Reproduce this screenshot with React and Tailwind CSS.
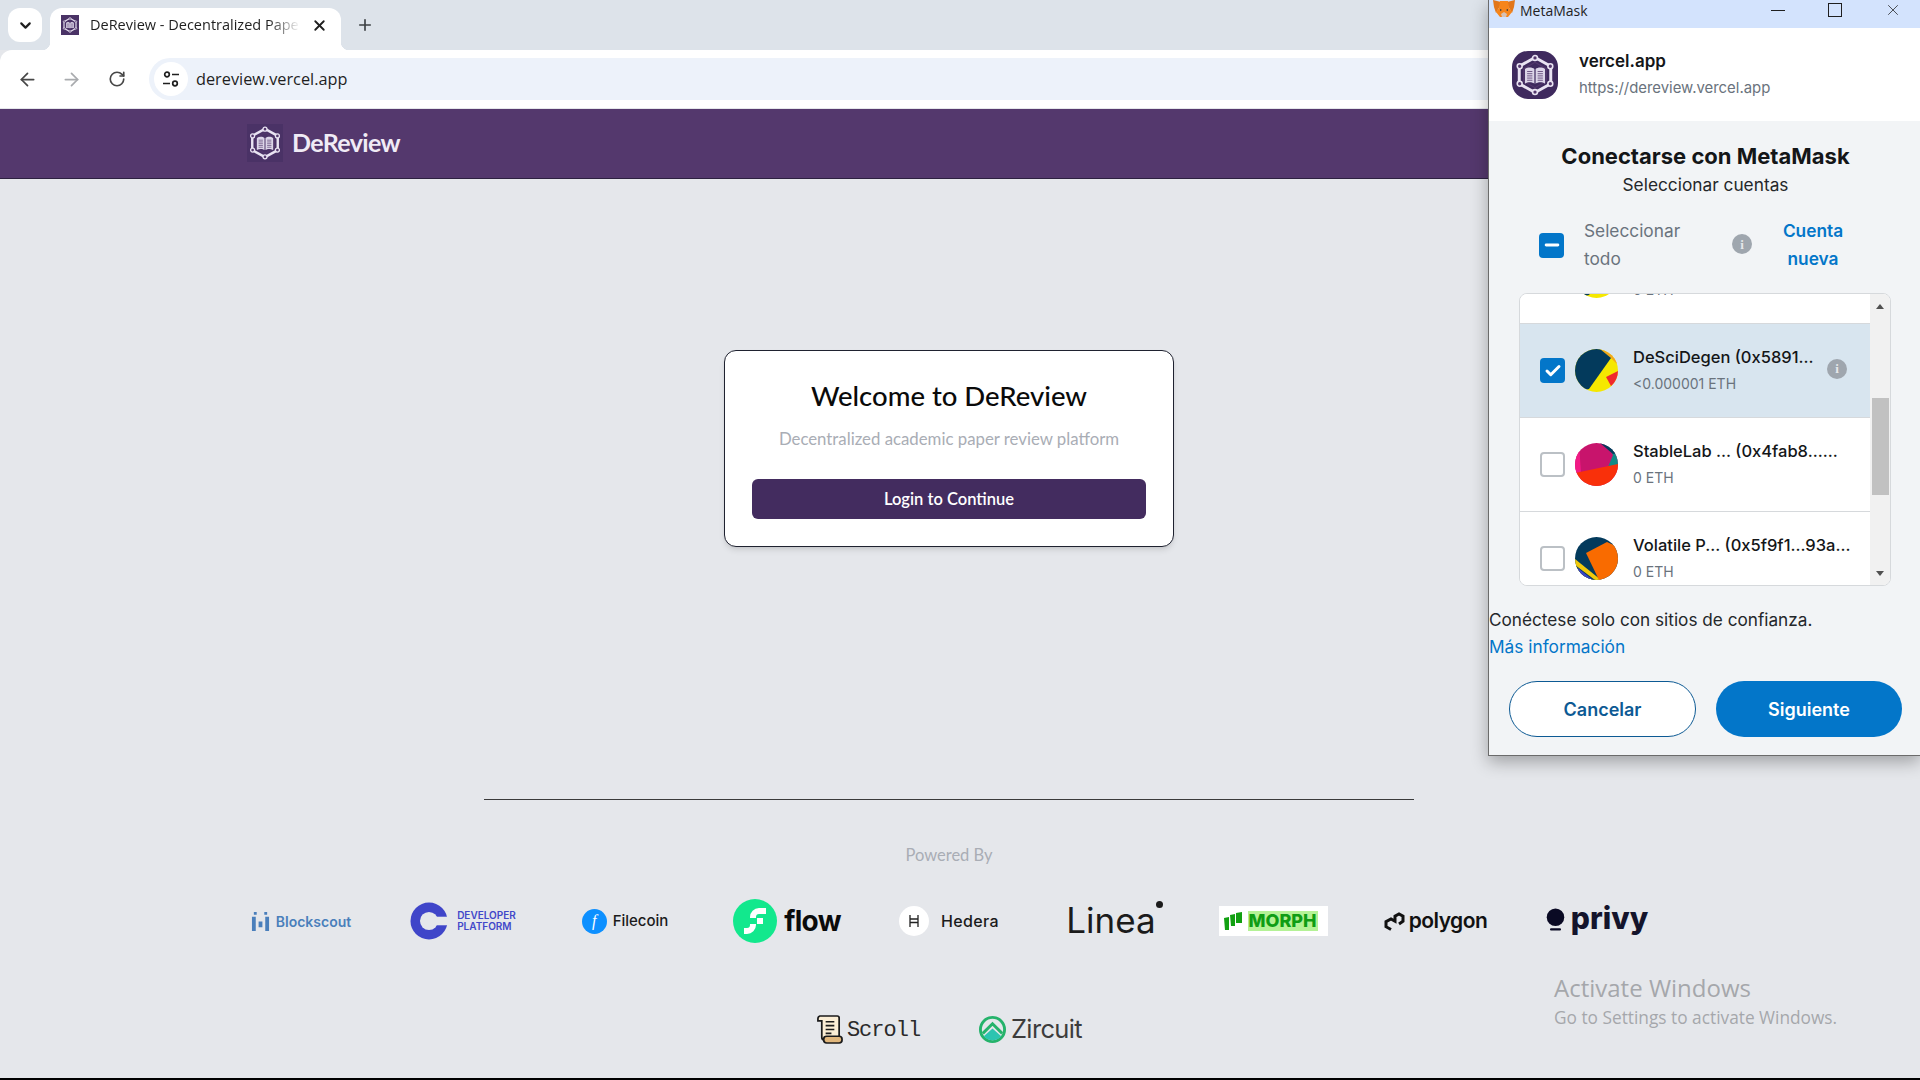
import React from 'react';
import { ArrowLeft, ArrowRight, ChevronDown, Minus, Check, Plus, RotateCw, X } from 'lucide-react';

function HexLogo({ className }) {
  return (
    <svg viewBox="0 0 48 48" className={className}>
      <path d="M24 4 L42 14 V34 L24 44 L6 34 V14 Z" fill="none" stroke="#e9e3f2" strokeWidth="3.4" strokeLinejoin="round" />
      <path d="M24 9.5 L37 17 V31 L24 38.5 L11 31 V17 Z" fill="none" stroke="#54386d" strokeWidth="1.2" />
      <g fill="#54386d" stroke="#e9e3f2" strokeWidth="1.8">
        <circle cx="24" cy="4.5" r="2.8" />
        <circle cx="41.5" cy="14" r="2.8" />
        <circle cx="41.5" cy="34" r="2.8" />
        <circle cx="24" cy="43.5" r="2.8" />
        <circle cx="6.5" cy="34" r="2.8" />
        <circle cx="6.5" cy="14" r="2.8" />
      </g>
      <path d="M12.5 17 C16 14.5 21 15 23.3 17 V34 C21 32 16 31.5 12.5 34 Z M24.7 17 C27 15 32 14.5 35.5 17 V34 C32 31.5 27 32 24.7 34 Z" fill="#dcd5e8" />
      <g stroke="#54386d" strokeWidth="0.9">
        <path d="M15 20H21M15 22.5H21M15 25H21M15 27.5H21M15 30H21M27 20H33M27 22.5H33M27 25H33M27 27.5H33M27 30H33" />
      </g>
    </svg>
  );
}

function Fox() {
  return (
    <svg viewBox="0 0 22 18" className="w-[22px] h-[18px]">
      <path d="M0 0 L8 2 L7 6 L3 13 L1 7 Z" fill="#e2761b" />
      <path d="M22 0 L14 2 L15 6 L19 13 L21 7 Z" fill="#e2761b" />
      <path d="M7 1 H15 L16 8 L19 12 L15 17 H7 L3 12 L6 8 Z" fill="#f6851b" />
      <path d="M8 14 L11 12 L14 14 L13 17 H9 Z" fill="#d7c1b3" />
      <path d="M7 9 L9 10 L7 11 Z M15 9 L13 10 L15 11 Z" fill="#233447" />
    </svg>
  );
}

function InfoDot({ className }) {
  return (
    <div className={`flex items-center justify-center w-5 h-5 rounded-full bg-[#9fa6ae] text-[#e6e8ea] ${className}`}>
      <span className="text-[13px] leading-none font-bold font-['Liberation_Serif',serif]">i</span>
    </div>
  );
}

function AvatarOne() {
  return (
    <svg viewBox="0 0 43 43" className="w-[43px] h-[43px] shrink-0 rounded-full">
      <rect width="43" height="43" fill="#f5e800" />
      <path d="M25 0 H43 V16 L36 9 Z" fill="#f2a61d" />
      <path d="M0 0 H25 L36 9 L14 40 L0 43 Z" fill="#033a5c" />
      <path d="M31 28 L43 22 L43 32 L36 37 Z" fill="#f0282d" />
    </svg>
  );
}

function AvatarTwo() {
  return (
    <svg viewBox="0 0 43 43" className="w-[43px] h-[43px] shrink-0 rounded-full">
      <rect width="43" height="43" fill="#c8146c" />
      <path d="M0 0 H4 L6 30 H0 Z" fill="#f11a85" />
      <path d="M30 0 H43 V23 L33 24 L38 12 Z" fill="#0f8a86" />
      <path d="M25 0 H43 V10 L38 11 Z" fill="#033a5c" />
      <path d="M0 30 L43 21 V43 H0 Z" fill="#f9300a" />
    </svg>
  );
}

function AvatarThree() {
  return (
    <svg viewBox="0 0 43 43" className="w-[43px] h-[43px] shrink-0 rounded-full">
      <rect width="43" height="43" fill="#033a5c" />
      <path d="M0 22 L26 43 H0 Z" fill="#f0c90a" />
      <path d="M0 28 L20 43 H0 Z" fill="#033a5c" />
      <path d="M3 31 L18 43 H3 Z" fill="#3a44c8" />
      <path d="M11 16 L32 5 L43 10 V43 H24 Z" fill="#f96b00" />
    </svg>
  );
}

function AccountRow({ name, balance, checked, avatar, info }) {
  return (
    <div className={`flex items-center h-[94px] shrink-0 pl-5 border-b border-[#d6d9dc] ${checked ? 'bg-[#d8e5ef]' : 'bg-white'}`}>
      {checked ? (
        <div className="flex items-center justify-center w-[25px] h-[25px] rounded bg-[#0376c9] shrink-0">
          <Check className="w-[18px] h-[18px] text-white" strokeWidth={4} />
        </div>
      ) : (
        <div className="w-[25px] h-[25px] rounded border-2 border-[#bbc0c5] bg-white shrink-0" />
      )}
      <div className="ml-[10px]">{avatar}</div>
      <div className="ml-[15px] min-w-0">
        <div className="text-[16.5px] leading-6 font-medium text-[#141618] whitespace-nowrap">{name}</div>
        <div className="mt-[3px] text-[14px] leading-6 text-[#6a737d]">{balance}</div>
      </div>
      {info && <InfoDot className="ml-auto mr-[23px] -mt-[4px]" />}
    </div>
  );
}

function Popup() {
  return (
    <div className="absolute top-0 right-0 w-[432px] h-[756px] flex flex-col bg-[#f2f4f6] border-l border-b border-[#6b6b6b] shadow-[0_6px_16px_rgba(0,0,0,0.3)] font-['Inter',sans-serif]">
      <div className="flex items-center h-[28px] shrink-0 bg-[#d3e3fd] overflow-hidden font-['Open_Sans',sans-serif]">
        <div className="ml-[4px] self-start"><Fox /></div>
        <span className="ml-[5px] text-[14px] text-[#1f1f1f] -mt-[8px]">MetaMask</span>
        <div className="ml-auto flex items-center -mt-[8px]">
          <div className="w-[14px] h-px bg-[#1f1f1f]" />
          <div className="ml-[43px] w-[14px] h-[14px] border border-[#1f1f1f]" />
          <X className="ml-[42px] mr-[18px] w-[18px] h-[18px] text-[#1f1f1f]" strokeWidth={1} />
        </div>
      </div>

      <div className="flex items-center h-[93px] shrink-0 bg-white pl-[23px]">
        <div className="w-[46px] h-[48px] flex items-center justify-center rounded-[16px] bg-[#3f2a5e]">
          <HexLogo className="w-[42px] h-[42px]" />
        </div>
        <div className="ml-[21px] -mt-[1px]">
          <div className="text-[17px] leading-6 font-semibold text-[#141618]">vercel.app</div>
          <div className="mt-[3px] text-[14.9px] leading-6 text-[#6a737d]">https://dereview.vercel.app</div>
        </div>
      </div>

      <div className="text-center mt-[21px] text-[22px] leading-7 font-bold text-[#141618] pl-[2px]">Conectarse con MetaMask</div>
      <div className="text-center mt-[3px] text-[17.3px] leading-6 text-[#24272a] pl-[2px]">Seleccionar cuentas</div>

      <div className="flex items-center mt-[18px] h-[60px] pl-[50px]">
        <div className="flex items-center justify-center w-[25px] h-[25px] rounded bg-[#0376c9] shrink-0">
          <Minus className="w-[20px] h-[20px] text-white" strokeWidth={3.5} />
        </div>
        <div className="ml-[20px] text-[17.3px] leading-7 text-[#6a737d] w-[130px]">Seleccionar todo</div>
        <InfoDot className="ml-[18px] -mt-[2px]" />
        <div className="ml-[10px] w-[102px] text-center text-[17.3px] leading-7 font-semibold text-[#0376c9]">Cuenta nueva</div>
      </div>

      <div className="mt-[18px] ml-[30px] w-[372px] h-[293px] shrink-0 flex rounded-lg border border-[#d6d9dc] bg-white overflow-hidden">
        <div className="flex-1 overflow-hidden">
          <div className="flex flex-col -mt-[64px]">
            <AccountRow name={'\u00a0'} balance="0 ETH" avatar={<AvatarOne />} />
            <AccountRow name="DeSciDegen (0x5891..." balance="<0.000001 ETH" avatar={<AvatarOne />} checked info />
            <AccountRow name="StableLab ... (0x4fab8......" balance="0 ETH" avatar={<AvatarTwo />} />
            <AccountRow name="Volatile P... (0x5f9f1...93a..." balance="0 ETH" avatar={<AvatarThree />} />
          </div>
        </div>
        <div className="w-[20px] shrink-0 bg-[#f1f1f1] flex flex-col items-center">
          <div className="mt-[10px] w-0 h-0 border-x-[4px] border-x-transparent border-b-[5px] border-b-[#505050]" />
          <div className="mt-[89px] w-[17px] h-[97px] bg-[#c1c1c1]" />
          <div className="mt-auto mb-[9px] w-0 h-0 border-x-[4px] border-x-transparent border-t-[5px] border-t-[#505050]" />
        </div>
      </div>

      <div className="mt-[22px] text-[17.2px] leading-6 text-[#24272a] whitespace-nowrap">Conéctese solo con sitios de confianza.</div>
      <div className="mt-[3px] text-[17.3px] leading-6 text-[#0376c9]">Más información</div>

      <div className="flex gap-5 mt-[22px] pl-[20px]">
        <button className="w-[187px] h-[56px] rounded-full border border-[#0d5a94] bg-white text-[18px] font-semibold text-[#0d5a94]">Cancelar</button>
        <button className="w-[186px] h-[56px] rounded-full bg-[#0376c9] text-[18px] font-semibold text-white">Siguiente</button>
      </div>
    </div>
  );
}

function Logo({ children }) {
  return <div className="flex items-center justify-center w-[130px] h-[60px] shrink-0">{children}</div>;
}

function PartnerLogos() {
  return (
    <div className="mt-[26px] w-[1500px] flex flex-wrap justify-center gap-x-8 gap-y-12 font-['Inter',sans-serif]">
      <Logo>
        <svg viewBox="0 0 20 20" className="w-[19px] h-[19px] mr-[6px]" fill="#4a7fbb">
          <path d="M1 5h4v15H1zM15 5h4v15h-4zM8 10h4v6H8zM3 0h3v3H3zM14 0h3v3h-3z" />
        </svg>
        <span className="text-[14px] font-semibold text-[#4a7fbb]">Blockscout</span>
      </Logo>
      <Logo>
        <svg viewBox="0 0 40 40" className="w-[38px] h-[38px] mr-[9px] shrink-0">
          <circle cx="20" cy="20" r="19.5" fill="#3f45c9" />
          <circle cx="20" cy="20" r="9.5" fill="#e5e7eb" />
          <rect x="26" y="15.5" width="14" height="9" fill="#e5e7eb" />
        </svg>
        <div className="text-[10px] leading-[11px] font-semibold text-[#4249c9]">DEVELOPER<br />PLATFORM</div>
      </Logo>
      <Logo>
        <div className="flex items-center justify-center w-[25px] h-[25px] rounded-full bg-[#0d90ff] mr-[6px]">
          <span className="text-[16px] leading-none italic text-white font-['Liberation_Serif',serif]">f</span>
        </div>
        <span className="text-[15px] font-medium text-[#1b1b1b]">Filecoin</span>
      </Logo>
      <Logo>
        <svg viewBox="0 0 44 44" className="w-[44px] h-[44px] mr-[7px] shrink-0">
          <circle cx="22" cy="22" r="22" fill="#12e88d" />
          <path d="M33 9h-7a9 9 0 0 0-9 9v1h6v-1a3 3 0 0 1 3-3h7z" fill="#fff" />
          <path d="M17 25v1a3 3 0 0 1-3 3h-3v6h3a9 9 0 0 0 9-9v-1z" fill="#fff" />
          <rect x="24" y="19" width="6" height="6" fill="#fff" />
        </svg>
        <span className="text-[28px] leading-none font-bold tracking-tight text-[#0b0b0b]">flow</span>
      </Logo>
      <Logo>
        <div className="flex items-center justify-center w-[30px] h-[30px] rounded-full bg-white mr-[12px] shrink-0">
          <svg viewBox="0 0 14 14" className="w-[14px] h-[14px]" fill="none" stroke="#222" strokeWidth="1.3">
            <path d="M3 1v12M11 1v12M3 5h8M3 8.5h8" />
          </svg>
        </div>
        <span className="text-[16px] font-medium tracking-wide text-[#1b1b1b]">Hedera</span>
      </Logo>
      <Logo>
        <div className="relative">
          <span className="text-[35px] leading-none text-[#1b1b1b]">Linea</span>
          <span className="absolute -top-[2px] -right-[7px] w-[7px] h-[7px] rounded-full bg-[#1b1b1b]" />
        </div>
      </Logo>
      <Logo>
        <div className="flex items-center h-[30px] w-[109px] bg-white pl-[5px]">
          <svg viewBox="0 0 20 18" className="w-[20px] h-[18px] mr-[4px]" fill="#12a012">
            <path d="M0 6l5-1v13H1zM6 3l5-1v12H7zM12 1l6-1v11h-6z" />
          </svg>
          <span className="px-[1px] text-[18px] leading-5 font-extrabold text-[#0f9d14] bg-[#b4f296]">MORPH</span>
        </div>
      </Logo>
      <Logo>
        <svg viewBox="0 0 22 22" className="w-[22px] h-[22px] mr-[4px]" fill="none" stroke="#111" strokeWidth="3">
          <path d="M8 19.5l-5-2.8v-5l5-2.8 4 2.3v-5l4-2.2 4 2.2v5L16 14" />
        </svg>
        <span className="text-[21px] font-semibold tracking-tight text-[#111]">polygon</span>
      </Logo>
      <Logo>
        <svg viewBox="0 0 20 26" className="w-[19px] h-[24px] mr-[6px] shrink-0 -mt-[2px]" fill="#0a0a24">
          <circle cx="10" cy="10" r="9.5" />
          <rect x="4" y="22" width="12" height="2.5" rx="1.2" />
        </svg>
        <span className="text-[30px] leading-none font-extrabold text-[#14142b] -mt-[6px]">privy</span>
      </Logo>
      <Logo>
        <svg viewBox="0 0 28 30" className="w-[27px] h-[29px] mr-[4px] shrink-0">
          <path d="M4 1h18a2 2 0 0 1 2 2v20H9v3a3 3 0 0 1-3-3V6H2V4a3 3 0 0 1 2-3z" fill="#fbeed5" stroke="#1b1b1b" strokeWidth="1.8" />
          <path d="M10 7h9M10 11h9M10 15h9M10 19h6" stroke="#1b1b1b" strokeWidth="1.6" />
          <rect x="8" y="22" width="19" height="7" rx="3" fill="#e1b77c" stroke="#1b1b1b" strokeWidth="1.8" />
        </svg>
        <span className="text-[22px] leading-none tracking-[-1px] mt-[3px] text-[#2a2a2a] font-['Liberation_Mono',monospace]">Scroll</span>
      </Logo>
      <Logo>
        <svg viewBox="0 0 30 30" className="w-[29px] h-[29px] mr-[4px] shrink-0">
          <circle cx="15" cy="15" r="12.5" fill="none" stroke="#25b36b" strokeWidth="3" />
          <path d="M5 19l10-10 10 10" fill="none" stroke="#25b36b" strokeWidth="3" />
          <path d="M6 22l9-8 9 8a12 12 0 0 1-18 0z" fill="#2cc4b0" />
        </svg>
        <span className="text-[25.5px] leading-none tracking-tight text-[#3c3c3c]">Zircuit</span>
      </Logo>
    </div>
  );
}

export default function App() {
  return (
    <div className="relative h-[1080px] w-[1920px] overflow-hidden bg-black">
      <div className="flex flex-col h-[1078px] bg-[#e5e7eb]">
        {/* browser chrome */}
        <div className="flex items-end h-[50px] shrink-0 bg-[#dde3ea] font-['Open_Sans',sans-serif]">
          <div className="flex items-center justify-center ml-[8px] mb-[8px] w-[34px] h-[34px] rounded-xl bg-white">
            <ChevronDown className="w-[17px] h-[17px] text-[#1f1f1f]" strokeWidth={3} />
          </div>
          <div className="relative flex items-center ml-[8px] w-[291px] h-[42px] pb-[8px] rounded-t-xl bg-white">
            <span className="absolute bottom-0 -left-2 w-2 h-2 bg-[radial-gradient(circle_at_0_0,transparent_8px,white_8.5px)]" />
            <span className="absolute bottom-0 -right-2 w-2 h-2 bg-[radial-gradient(circle_at_100%_0,transparent_8px,white_8.5px)]" />
            <div className="ml-[11px] w-[18px] h-[20px] shrink-0 bg-[#4a3266] flex items-center justify-center">
              <HexLogo className="w-[16px] h-[16px]" />
            </div>
            <div className="ml-[11px] w-[210px] overflow-hidden whitespace-nowrap text-[14.5px] text-[#1f1f1f] [mask-image:linear-gradient(to_right,black_85%,transparent)]">
              DeReview - Decentralized Paper Review
            </div>
            <X className="ml-[11px] w-[17px] h-[17px] shrink-0 text-[#1f1f1f]" strokeWidth={2.6} />
          </div>
          <Plus className="ml-[15px] mb-[16px] w-[18px] h-[18px] text-[#3c4043]" strokeWidth={2.2} />
        </div>
        <div className="flex items-center h-[59px] shrink-0 bg-white rounded-tl-xl border-b border-[#e4e6ea] font-['Open_Sans',sans-serif]">
          <ArrowLeft className="ml-[17px] w-[21px] h-[21px] text-[#474747]" strokeWidth={2} />
          <ArrowRight className="ml-[23px] w-[21px] h-[21px] text-[#a9abae]" strokeWidth={2} />
          <RotateCw className="ml-[26px] w-[18px] h-[18px] text-[#474747]" strokeWidth={2.2} />
          <div className="flex items-center ml-[23px] flex-1 h-[42px] rounded-l-full bg-[#edf2fa] pl-[5px]">
            <div className="flex items-center justify-center w-[34px] h-[34px] rounded-full bg-white">
              <svg viewBox="0 0 18 18" className="w-[18px] h-[18px]" fill="none" stroke="#1f1f1f" strokeWidth="1.7">
                <circle cx="5" cy="4.5" r="2.3" />
                <path d="M10 4.5h7M1 13.5h7" />
                <circle cx="13" cy="13.5" r="2.3" />
              </svg>
            </div>
            <span className="ml-[8px] mt-[1px] text-[16.3px] text-[#1f1f1f]">dereview.vercel.app</span>
          </div>
        </div>

        {/* site header */}
        <div className="flex items-center h-[70px] shrink-0 bg-[#54386d] border-b border-[#2d2140] pl-[247px] pb-[2px]">
          <div className="flex items-center justify-center w-[36px] h-[38px] bg-[#4a3266]">
            <HexLogo className="w-[34px] h-[34px]" />
          </div>
          <span className="ml-[9px] text-[25px] font-bold tracking-tight text-[#f0ebf5] font-['Lato',sans-serif]">DeReview</span>
        </div>

        {/* page */}
        <div className="flex-1 w-[1898px] flex flex-col items-center font-['Lato',sans-serif]">
          <div className="mt-[171px] w-[450px] h-[197px] rounded-xl border border-[#1f2230] bg-white shadow-md flex flex-col items-center">
            <h1 className="mt-[27px] text-[27.5px] leading-9 font-medium text-[#0a0a0a]">Welcome to DeReview</h1>
            <p className="mt-[13px] text-[16.8px] leading-6 text-[#a9adb5]">Decentralized academic paper review platform</p>
            <button className="mt-[28px] w-[394px] h-[40px] rounded-md bg-[#432c5f] text-[16.5px] font-semibold text-white">Login to Continue</button>
          </div>
          <div className="mt-[252px] w-[930px] h-px bg-[#3a3a3a]" />
          <div className="mt-[45px] text-[16.5px] leading-5 text-[#a9adb5]">Powered By</div>
          <PartnerLogos />
        </div>
      </div>

      <Popup />

      <div className="absolute left-[1554px] top-[970px] text-[#a5a7ab] font-['Open_Sans',sans-serif]">
        <div className="text-[24px] leading-9">Activate Windows</div>
        <div className="text-[17.3px] leading-6">Go to Settings to activate Windows.</div>
      </div>
    </div>
  );
}
